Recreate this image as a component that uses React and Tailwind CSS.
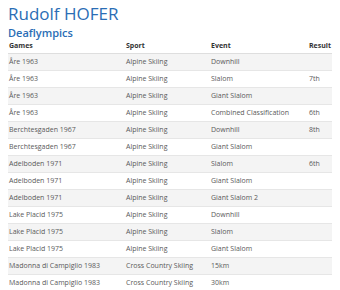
const rows = [
  ["Åre 1963", "Alpine Skiing", "Downhill", ""],
  ["Åre 1963", "Alpine Skiing", "Slalom", "7th"],
  ["Åre 1963", "Alpine Skiing", "Giant Slalom", ""],
  ["Åre 1963", "Alpine Skiing", "Combined Classification", "6th"],
  ["Berchtesgaden 1967", "Alpine Skiing", "Downhill", "8th"],
  ["Berchtesgaden 1967", "Alpine Skiing", "Giant Slalom", ""],
  ["Adelboden 1971", "Alpine Skiing", "Slalom", "6th"],
  ["Adelboden 1971", "Alpine Skiing", "Giant Slalom", ""],
  ["Adelboden 1971", "Alpine Skiing", "Giant Slalom 2", ""],
  ["Lake Placid 1975", "Alpine Skiing", "Downhill", ""],
  ["Lake Placid 1975", "Alpine Skiing", "Slalom", ""],
  ["Lake Placid 1975", "Alpine Skiing", "Giant Slalom", ""],
  ["Madonna di Campiglio 1983", "Cross Country Skiing", "15km", ""],
  ["Madonna di Campiglio 1983", "Cross Country Skiing", "30km", ""],
]

const App = () => {
  return (
    <div className="w-[340px] h-[290px] overflow-hidden bg-white pl-2 pr-2 font-['Open_Sans',sans-serif]">
      {/* Heading */}
      <h1 className="text-[17px] leading-[22px] pt-[3px] text-[#2a6db5]">Rudolf HOFER</h1>
      <h2 className="text-[11px] leading-[14px] mt-[1px] font-semibold text-[#2a6db5]">Deaflympics</h2>

      {/* Results table */}
      <div>
        <div className="grid grid-cols-[117px_85px_98px_1fr] h-[14px] items-center text-[7px] font-bold text-[#333] border-b border-[#dedede]">
          <div className="pl-[1px]">Games</div>
          <div className="pl-[1px]">Sport</div>
          <div className="pl-[1px]">Event</div>
          <div className="pl-[1px]">Result</div>
        </div>
        {rows.map((r, i) => (
          <div
            key={i}
            className={
              "grid grid-cols-[117px_85px_98px_1fr] h-[17px] items-center text-[7px] text-[#5a5a5a] border-b border-[#e6e6e6] " +
              (i % 2 === 0 ? "bg-[#f4f4f4]" : "bg-white")
            }
          >
            <div className="pl-[1px] whitespace-nowrap">{r[0]}</div>
            <div className="pl-[1px] whitespace-nowrap">{r[1]}</div>
            <div className="pl-[1px] whitespace-nowrap">{r[2]}</div>
            <div className="pl-[1px] whitespace-nowrap">{r[3]}</div>
          </div>
        ))}
      </div>
    </div>
  )
}

export default App
